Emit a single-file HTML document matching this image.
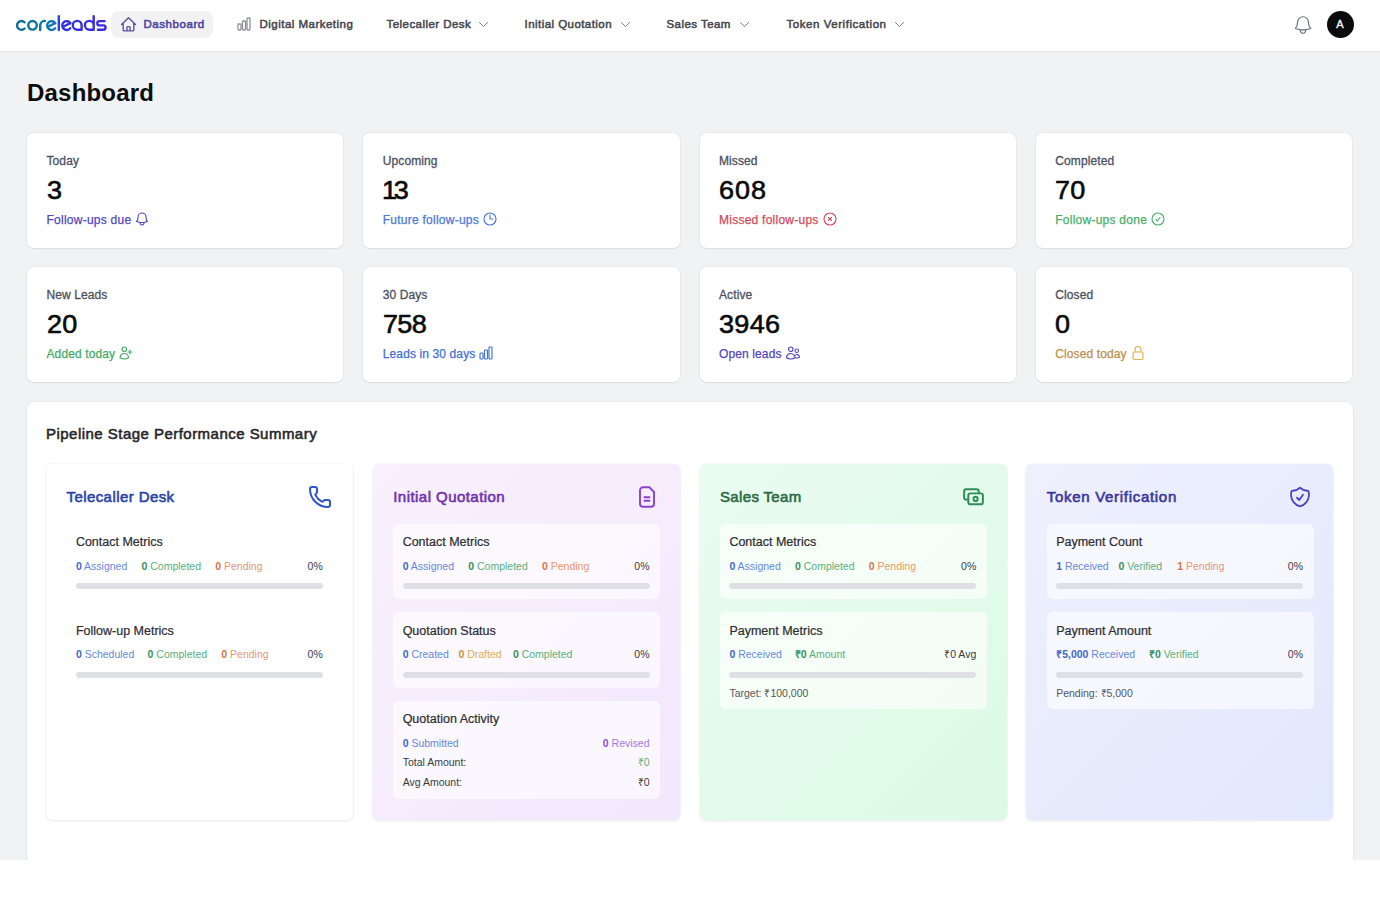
<!DOCTYPE html>
<html><head><meta charset="utf-8"><style>
*{box-sizing:border-box;margin:0;padding:0}
html,body{width:1380px;height:923px;overflow:hidden;background:#fff;font-family:"Liberation Sans",sans-serif;color:#111}
.abs{position:absolute}
.t{position:absolute;white-space:nowrap;line-height:1}
#page{position:absolute;left:0;top:0;width:1380px;height:860px;background:#f1f2f4;overflow:hidden}
#hdr{position:absolute;left:0;top:0;width:1380px;height:52px;background:#fff;border-bottom:1px solid #e7e8eb}
.nav{font-size:11.5px;color:#45464d;-webkit-text-stroke:0.5px #45464d;letter-spacing:0.45px}
.card{position:absolute;background:#fff;border-radius:7px;box-shadow:0 1px 2px rgba(16,24,40,.06),0 0 0 1px rgba(16,24,40,.03)}
.lab{font-size:12px;color:#4b5060;-webkit-text-stroke:0.3px #4b5060;letter-spacing:0.1px}
.num{font-size:25px;color:#0b0b0b;-webkit-text-stroke:0.6px #0b0b0b;letter-spacing:0.3px;transform:scaleX(1.08);transform-origin:0 0}
.sub{font-size:12px;letter-spacing:0.25px;display:flex;align-items:center}
#pipe{position:absolute;left:27px;top:402px;width:1326px;height:500px;background:#fff;border-radius:8px;box-shadow:0 1px 2px rgba(16,24,40,.05),0 0 0 1px rgba(16,24,40,.03)}
.stage{position:absolute;top:464px;width:307px;height:356px;border-radius:6px;box-shadow:0 1px 3px rgba(16,24,40,.08),0 0 0 1px rgba(16,24,40,.02)}
.stt{font-size:15px;letter-spacing:0.35px;-webkit-text-stroke:0.6px currentColor}
.sc{position:absolute;left:20px;width:267px;border-radius:6px}
.sct{font-size:12.5px;color:#2d2d33;-webkit-text-stroke:0.22px #2d2d33}
.mt{font-size:10.5px}
.mt b{font-weight:bold}
.bar{position:absolute;height:6px;border-radius:3px;background:#dfe0e5}
.bl{color:#6588da}.bl b{color:#4267c6}.gr{color:#58b07b}.gr b{color:#38905a}.or{color:#e9966c}.or b{color:#d6744a}.pu{color:#a47ade}.pu b{color:#8a52cc}.yl{color:#e0ad5c}.yl b{color:#c9953a}.dk{color:#3a3a3e}
</style></head><body>
<div id="page">
<div id="hdr">
<svg class="abs" style="left:0;top:0" width="120" height="50" viewBox="0 0 120 50" fill="none" stroke="url(#lg)" stroke-width="2.4" stroke-linecap="round" stroke-linejoin="round"><defs><linearGradient id="lg" gradientUnits="userSpaceOnUse" x1="16" y1="0" x2="107" y2="0"><stop offset="0" stop-color="#0b6d98"/><stop offset=".36" stop-color="#0d78a6"/><stop offset=".44" stop-color="#1a74c8"/><stop offset=".48" stop-color="#3233dd"/><stop offset="1" stop-color="#3b2be0"/></linearGradient></defs><path d="M24.6 22.3A4.4 4.4 0 1 0 24.6 28.5"/><circle cx="32.5" cy="25.3" r="4.3"/><path d="M40.2 30V25A4.6 4.6 0 0 1 44.9 20.9"/><path d="M47.5 27L55.3 23.2A4.4 4.4 0 1 0 55.1 28.2"/><path d="M58.8 16.2V30"/><path d="M62.6 27L70.4 23.2A4.4 4.4 0 1 0 70.2 28.2"/><path d="M77.2 29.7A4.4 4.4 0 1 1 81.6 25.3V29.7Z"/><path d="M93.7 16.2V29.7H89.3A4.4 4.4 0 1 1 93.7 25.3"/><path d="M104.6 21.1H99.4A2.15 2.15 0 0 0 99.4 25.4H103.4A2.15 2.15 0 0 1 103.4 29.7H97.9"/></svg>
<div class="abs" style="left:111px;top:11px;width:102px;height:27px;border-radius:8px;background:#f2f2f4"></div>
<svg class="abs" style="left:120px;top:16px" width="17" height="17" viewBox="0 0 24 24" fill="none" stroke="#5b5499" stroke-width="2.0" stroke-linecap="round" stroke-linejoin="round"><path d="m2.25 12 8.954-8.955c.44-.439 1.152-.439 1.591 0L21.75 12M4.5 9.75v10.125c0 .621.504 1.125 1.125 1.125H9.75v-4.875c0-.621.504-1.125 1.125-1.125h2.25c.621 0 1.125.504 1.125 1.125V21h4.125c.621 0 1.125-.504 1.125-1.125V9.75M8.25 21h8.25"/></svg>
<div class="t nav" style="left:143.5px;top:19px;color:#5249a0;-webkit-text-stroke:0.6px #5249a0;letter-spacing:0.55px">Dashboard</div>
<svg class="abs" style="left:236px;top:16px" width="16" height="16" viewBox="0 0 24 24" fill="none" stroke="#8e9198" stroke-width="1.9" stroke-linecap="round" stroke-linejoin="round"><path d="M3 13.125C3 12.504 3.504 12 4.125 12h2.25c.621 0 1.125.504 1.125 1.125v6.75C7.5 20.496 6.996 21 6.375 21h-2.25A1.125 1.125 0 0 1 3 19.875v-6.75ZM9.75 8.625c0-.621.504-1.125 1.125-1.125h2.25c.621 0 1.125.504 1.125 1.125v11.25c0 .621-.504 1.125-1.125 1.125h-2.25a1.125 1.125 0 0 1-1.125-1.125V8.625ZM16.5 4.125c0-.621.504-1.125 1.125-1.125h2.25C20.496 3 21 3.504 21 4.125v15.75c0 .621-.504 1.125-1.125 1.125h-2.25a1.125 1.125 0 0 1-1.125-1.125V4.125Z"/></svg>
<div class="t nav" style="left:259.5px;top:19px;letter-spacing:0.48px">Digital Marketing</div>
<div class="t nav" style="left:386.5px;top:19px;letter-spacing:0.45px">Telecaller Desk</div>
<svg class="abs" style="left:477px;top:18px" width="13" height="13" viewBox="0 0 24 24" fill="none" stroke="#6b6f78" stroke-width="1.7" stroke-linecap="round" stroke-linejoin="round"><path d="m19.5 8.25-7.5 7.5-7.5-7.5"/></svg>
<div class="t nav" style="left:524.5px;top:19px;letter-spacing:0.45px">Initial Quotation</div>
<svg class="abs" style="left:618.5px;top:18px" width="13" height="13" viewBox="0 0 24 24" fill="none" stroke="#6b6f78" stroke-width="1.7" stroke-linecap="round" stroke-linejoin="round"><path d="m19.5 8.25-7.5 7.5-7.5-7.5"/></svg>
<div class="t nav" style="left:666.5px;top:19px;letter-spacing:0.45px">Sales Team</div>
<svg class="abs" style="left:737.5px;top:18px" width="13" height="13" viewBox="0 0 24 24" fill="none" stroke="#6b6f78" stroke-width="1.7" stroke-linecap="round" stroke-linejoin="round"><path d="m19.5 8.25-7.5 7.5-7.5-7.5"/></svg>
<div class="t nav" style="left:786.5px;top:19px;letter-spacing:0.55px">Token Verification</div>
<svg class="abs" style="left:892.5px;top:18px" width="13" height="13" viewBox="0 0 24 24" fill="none" stroke="#6b6f78" stroke-width="1.7" stroke-linecap="round" stroke-linejoin="round"><path d="m19.5 8.25-7.5 7.5-7.5-7.5"/></svg>
<svg class="abs" style="left:1292px;top:14px" width="22" height="22" viewBox="0 0 24 24" fill="none" stroke="#6b6f78" stroke-width="1.3" stroke-linecap="round" stroke-linejoin="round"><path d="M14.857 17.082a23.848 23.848 0 0 0 5.454-1.31A8.967 8.967 0 0 1 18 9.75V9A6 6 0 0 0 6 9v.75a8.967 8.967 0 0 1-2.312 6.022c1.733.64 3.56 1.085 5.455 1.31m5.714 0a24.255 24.255 0 0 1-5.714 0m5.714 0a3 3 0 1 1-5.714 0"/></svg>
<div class="abs" style="left:1326.5px;top:11px;width:27px;height:27px;border-radius:50%;background:#0b0b0b"></div>
<div class="t" style="left:1326.5px;top:19px;width:27px;text-align:center;font-size:11px;color:#fff;-webkit-text-stroke:0.3px #fff">A</div>
</div>
<div class="t " style="left:27.00px;top:80.54px;font-size:24px;font-weight:bold;color:#0d0d0d;letter-spacing:0.2px">Dashboard</div>
<div class="card" style="left:27px;top:133px;width:316.25px;height:115px"></div>
<div class="t lab" style="left:46.50px;top:154.62px;">Today</div>
<div class="t num" style="left:46.50px;top:177.59px;">3</div>
<div class="t sub" style="left:46.5px;top:213.27px;color:#5146c0;-webkit-text-stroke:0.25px #5146c0;letter-spacing:0.25px">Follow-ups due<svg style="margin-left:3px;margin-top:-2px;-webkit-text-stroke:0" width="16" height="16" viewBox="0 0 24 24" fill="none" stroke="#5146c0" stroke-width="1.7" stroke-linecap="round" stroke-linejoin="round"><path d="M14.857 17.082a23.848 23.848 0 0 0 5.454-1.31A8.967 8.967 0 0 1 18 9.75V9A6 6 0 0 0 6 9v.75a8.967 8.967 0 0 1-2.312 6.022c1.733.64 3.56 1.085 5.455 1.31m5.714 0a24.255 24.255 0 0 1-5.714 0m5.714 0a3 3 0 1 1-5.714 0"/></svg></div>
<div class="card" style="left:363.25px;top:133px;width:316.25px;height:115px"></div>
<div class="t lab" style="left:382.75px;top:154.62px;">Upcoming</div>
<div class="t num" style="left:381.75px;top:177.59px;letter-spacing:-3.0px">13</div>
<div class="t sub" style="left:382.75px;top:213.27px;color:#4a78d8;-webkit-text-stroke:0.25px #4a78d8;letter-spacing:0.25px">Future follow-ups<svg style="margin-left:3px;margin-top:-2px;-webkit-text-stroke:0" width="16" height="16" viewBox="0 0 24 24" fill="none" stroke="#4a78d8" stroke-width="1.7" stroke-linecap="round" stroke-linejoin="round"><path d="M12 6v6h4.5m4.5 0a9 9 0 1 1-18 0 9 9 0 0 1 18 0Z"/></svg></div>
<div class="card" style="left:699.5px;top:133px;width:316.25px;height:115px"></div>
<div class="t lab" style="left:719.00px;top:154.62px;">Missed</div>
<div class="t num" style="left:719.00px;top:177.59px;letter-spacing:0.9px">608</div>
<div class="t sub" style="left:719.0px;top:213.27px;color:#d24a5a;-webkit-text-stroke:0.25px #d24a5a;letter-spacing:0.25px">Missed follow-ups<svg style="margin-left:3px;margin-top:-2px;-webkit-text-stroke:0" width="16" height="16" viewBox="0 0 24 24" fill="none" stroke="#d24a5a" stroke-width="1.7" stroke-linecap="round" stroke-linejoin="round"><path d="m9.75 9.75 4.5 4.5m0-4.5-4.5 4.5M21 12a9 9 0 1 1-18 0 9 9 0 0 1 18 0Z"/></svg></div>
<div class="card" style="left:1035.75px;top:133px;width:316.25px;height:115px"></div>
<div class="t lab" style="left:1055.25px;top:154.62px;">Completed</div>
<div class="t num" style="left:1055.25px;top:177.59px;">70</div>
<div class="t sub" style="left:1055.25px;top:213.27px;color:#4aad6c;-webkit-text-stroke:0.25px #4aad6c;letter-spacing:0.25px">Follow-ups done<svg style="margin-left:3px;margin-top:-2px;-webkit-text-stroke:0" width="16" height="16" viewBox="0 0 24 24" fill="none" stroke="#4aad6c" stroke-width="1.7" stroke-linecap="round" stroke-linejoin="round"><path d="M9 12.75 11.25 15 15 9.75M21 12a9 9 0 1 1-18 0 9 9 0 0 1 18 0Z"/></svg></div>
<div class="card" style="left:27px;top:267px;width:316.25px;height:115px"></div>
<div class="t lab" style="left:46.50px;top:288.62px;">New Leads</div>
<div class="t num" style="left:46.50px;top:311.59px;">20</div>
<div class="t sub" style="left:46.5px;top:347.27px;color:#45aa66;-webkit-text-stroke:0.25px #45aa66;letter-spacing:0.12px">Added today<svg style="margin-left:3px;margin-top:-2px;-webkit-text-stroke:0" width="16" height="16" viewBox="0 0 24 24" fill="none" stroke="#45aa66" stroke-width="1.7" stroke-linecap="round" stroke-linejoin="round"><path d="M18 7.5v3m0 0v3m0-3h3m-3 0h-3m-2.25-4.125a3.375 3.375 0 1 1-6.75 0 3.375 3.375 0 0 1 6.75 0ZM3 19.235v-.11a6.375 6.375 0 0 1 12.75 0v.109A12.318 12.318 0 0 1 9.374 21c-2.331 0-4.512-.645-6.374-1.766Z"/></svg></div>
<div class="card" style="left:363.25px;top:267px;width:316.25px;height:115px"></div>
<div class="t lab" style="left:382.75px;top:288.62px;">30 Days</div>
<div class="t num" style="left:382.75px;top:311.59px;letter-spacing:-0.6px">758</div>
<div class="t sub" style="left:382.75px;top:347.27px;color:#3f6fd6;-webkit-text-stroke:0.25px #3f6fd6;letter-spacing:0.12px">Leads in 30 days<svg style="margin-left:3px;margin-top:-2px;-webkit-text-stroke:0" width="16" height="16" viewBox="0 0 24 24" fill="none" stroke="#3f6fd6" stroke-width="1.7" stroke-linecap="round" stroke-linejoin="round"><path d="M3 13.125C3 12.504 3.504 12 4.125 12h2.25c.621 0 1.125.504 1.125 1.125v6.75C7.5 20.496 6.996 21 6.375 21h-2.25A1.125 1.125 0 0 1 3 19.875v-6.75ZM9.75 8.625c0-.621.504-1.125 1.125-1.125h2.25c.621 0 1.125.504 1.125 1.125v11.25c0 .621-.504 1.125-1.125 1.125h-2.25a1.125 1.125 0 0 1-1.125-1.125V8.625ZM16.5 4.125c0-.621.504-1.125 1.125-1.125h2.25C20.496 3 21 3.504 21 4.125v15.75c0 .621-.504 1.125-1.125 1.125h-2.25a1.125 1.125 0 0 1-1.125-1.125V4.125Z"/></svg></div>
<div class="card" style="left:699.5px;top:267px;width:316.25px;height:115px"></div>
<div class="t lab" style="left:719.00px;top:288.62px;">Active</div>
<div class="t num" style="left:719.00px;top:311.59px;">3946</div>
<div class="t sub" style="left:719.0px;top:347.27px;color:#5146c0;-webkit-text-stroke:0.25px #5146c0;letter-spacing:0.12px">Open leads<svg style="margin-left:3px;margin-top:-2px;-webkit-text-stroke:0" width="16" height="16" viewBox="0 0 24 24" fill="none" stroke="#5146c0" stroke-width="1.7" stroke-linecap="round" stroke-linejoin="round"><path d="M15 19.128a9.38 9.38 0 0 0 2.625.372 9.337 9.337 0 0 0 4.121-.952 4.125 4.125 0 0 0-7.533-2.493M15 19.128v-.003c0-1.113-.285-2.16-.786-3.07M15 19.128v.106A12.318 12.318 0 0 1 8.624 21c-2.331 0-4.512-.645-6.374-1.766l-.001-.109a6.375 6.375 0 0 1 11.964-3.07M12 6.375a3.375 3.375 0 1 1-6.75 0 3.375 3.375 0 0 1 6.75 0Zm8.25 2.25a2.625 2.625 0 1 1-5.25 0 2.625 2.625 0 0 1 5.25 0Z"/></svg></div>
<div class="card" style="left:1035.75px;top:267px;width:316.25px;height:115px"></div>
<div class="t lab" style="left:1055.25px;top:288.62px;">Closed</div>
<div class="t num" style="left:1055.25px;top:311.59px;letter-spacing:0.3px">0</div>
<div class="t sub" style="left:1055.25px;top:347.27px;color:#b8904f;-webkit-text-stroke:0.25px #b8904f;letter-spacing:0.12px">Closed today<svg style="margin-left:3px;margin-top:-2px;-webkit-text-stroke:0" width="16" height="16" viewBox="0 0 24 24" fill="none" stroke="#e0b048" stroke-width="1.7" stroke-linecap="round" stroke-linejoin="round"><path d="M16.5 10.5V6.75a4.5 4.5 0 1 0-9 0v3.75m-.75 11.25h10.5a2.25 2.25 0 0 0 2.25-2.25v-6.75a2.25 2.25 0 0 0-2.25-2.25H6.75a2.25 2.25 0 0 0-2.25 2.25v6.75a2.25 2.25 0 0 0 2.25 2.25Z"/></svg></div>
<div id="pipe"></div>
<div class="t " style="left:46.00px;top:425.66px;font-size:15px;color:#26262b;-webkit-text-stroke:0.55px #26262b;letter-spacing:0.47px">Pipeline Stage Performance Summary</div>
<div class="stage" style="left:46px;background:#fff"></div>
<div class="t stt" style="left:66.50px;top:489.21px;color:#2c44a8;letter-spacing:0.42px">Telecaller Desk</div>
<svg class="abs" style="left:308px;top:485px" width="24" height="24" viewBox="0 0 24 24" fill="none" stroke="#2f55c8" stroke-width="2.0" stroke-linecap="round" stroke-linejoin="round"><path d="M13.832 16.568a1 1 0 0 0 1.213-.303l.355-.465A2 2 0 0 1 17 15h3a2 2 0 0 1 2 2v3a2 2 0 0 1-2 2A18 18 0 0 1 2 4a2 2 0 0 1 2-2h3a2 2 0 0 1 2 2v3a2 2 0 0 1-.8 1.6l-.468.351a1 1 0 0 0-.292 1.233 14 14 0 0 0 6.392 6.384"/></svg>
<div class="t sct" style="left:75.90px;top:536.02px;">Contact Metrics</div>
<div class="t mt bl" style="left:75.90px;top:560.52px;"><b>0</b> Assigned</div>
<div class="t mt gr" style="left:141.50px;top:560.52px;"><b>0</b> Completed</div>
<div class="t mt or" style="left:215.20px;top:560.52px;"><b>0</b> Pending</div>
<div class="t mt dk" style="right:1057.25px;top:560.52px">0%</div>
<div class="bar" style="left:75.90px;top:583px;width:246.9px"></div>
<div class="t sct" style="left:75.90px;top:624.72px;">Follow-up Metrics</div>
<div class="t mt bl" style="left:75.90px;top:649.32px;"><b>0</b> Scheduled</div>
<div class="t mt gr" style="left:147.60px;top:649.32px;"><b>0</b> Completed</div>
<div class="t mt or" style="left:221.30px;top:649.32px;"><b>0</b> Pending</div>
<div class="t mt dk" style="right:1057.25px;top:649.32px">0%</div>
<div class="bar" style="left:75.90px;top:671.5px;width:246.9px"></div>
<div class="stage" style="left:372.75px;background:linear-gradient(135deg,#f9f1fd 0%,#f2e7fc 100%)"></div>
<div class="t stt" style="left:393.25px;top:489.21px;color:#7033ae;letter-spacing:0.45px">Initial Quotation</div>
<svg class="abs" style="left:634.5px;top:485px" width="24" height="24" viewBox="0 0 24 24" fill="none" stroke="#8a40d2" stroke-width="1.9" stroke-linecap="round" stroke-linejoin="round"><path d="M14.5 2.3H8a3 3 0 0 0-3 3v13.4a3 3 0 0 0 3 3h8a3 3 0 0 0 3-3V7Z"/><path d="M9.5 12.2h5M9.5 15.8h5"/></svg>
<div class="sc" style="left:393.00px;top:524px;height:75px;background:rgba(255,255,255,.62)"></div>
<div class="t sct" style="left:402.65px;top:536.02px;">Contact Metrics</div>
<div class="t mt bl" style="left:402.65px;top:560.52px;"><b>0</b> Assigned</div>
<div class="t mt gr" style="left:468.25px;top:560.52px;"><b>0</b> Completed</div>
<div class="t mt or" style="left:541.95px;top:560.52px;"><b>0</b> Pending</div>
<div class="t mt dk" style="right:730.50px;top:560.52px">0%</div>
<div class="bar" style="left:402.65px;top:583px;width:246.9px"></div>
<div class="sc" style="left:393.00px;top:611.5px;height:76px;background:rgba(255,255,255,.62)"></div>
<div class="t sct" style="left:402.65px;top:624.72px;">Quotation Status</div>
<div class="t mt bl" style="left:402.65px;top:649.32px;"><b>0</b> Created</div>
<div class="t mt yl" style="left:458.40px;top:649.32px;"><b>0</b> Drafted</div>
<div class="t mt gr" style="left:512.90px;top:649.32px;"><b>0</b> Completed</div>
<div class="t mt dk" style="right:730.50px;top:649.32px">0%</div>
<div class="bar" style="left:402.65px;top:671.5px;width:246.9px"></div>
<div class="sc" style="left:393.00px;top:701px;height:98px;background:rgba(255,255,255,.62)"></div>
<div class="t sct" style="left:402.65px;top:713.32px;">Quotation Activity</div>
<div class="t mt bl" style="left:402.65px;top:738.02px;"><b>0</b> Submitted</div>
<div class="t mt pu" style="right:730.50px;top:738.02px"><b>0</b> Revised</div>
<div class="t mt dk" style="left:402.65px;top:757.47px;">Total Amount:</div>
<div class="t mt gr" style="right:730.50px;top:757.47px">&#8377;0</div>
<div class="t mt dk" style="left:402.65px;top:776.92px;">Avg Amount:</div>
<div class="t mt dk" style="right:730.50px;top:776.92px">&#8377;0</div>
<div class="stage" style="left:699.5px;background:linear-gradient(135deg,#eafcf0 0%,#dcfae5 100%)"></div>
<div class="t stt" style="left:720.00px;top:489.21px;color:#2d6b47">Sales Team</div>
<svg class="abs" style="left:961px;top:484px" width="25" height="25" viewBox="0 0 24 24" fill="none" stroke="#2e8d55" stroke-width="1.9" stroke-linecap="round" stroke-linejoin="round"><path d="M7 11a2 2 0 0 1 2-2h10a2 2 0 0 1 2 2v6.5a2 2 0 0 1-2 2H9a2 2 0 0 1-2-2z"/><path d="M12 14.3a2 2 0 1 0 4 0a2 2 0 1 0-4 0"/><path d="M17 9V7a2 2 0 0 0-2-2H5a2 2 0 0 0-2 2v6a2 2 0 0 0 2 2h2"/></svg>
<div class="sc" style="left:719.75px;top:524px;height:75px;background:rgba(255,255,255,.62)"></div>
<div class="t sct" style="left:729.40px;top:536.02px;">Contact Metrics</div>
<div class="t mt bl" style="left:729.40px;top:560.52px;"><b>0</b> Assigned</div>
<div class="t mt gr" style="left:795.00px;top:560.52px;"><b>0</b> Completed</div>
<div class="t mt or" style="left:868.70px;top:560.52px;"><b>0</b> Pending</div>
<div class="t mt dk" style="right:403.75px;top:560.52px">0%</div>
<div class="bar" style="left:729.40px;top:583px;width:246.9px"></div>
<div class="sc" style="left:719.75px;top:611.5px;height:97.5px;background:rgba(255,255,255,.62)"></div>
<div class="t sct" style="left:729.40px;top:624.72px;">Payment Metrics</div>
<div class="t mt bl" style="left:729.40px;top:649.32px;"><b>0</b> Received</div>
<div class="t mt gr" style="left:794.80px;top:649.32px;"><b>&#8377;0</b> Amount</div>
<div class="t mt dk" style="right:403.75px;top:649.32px">&#8377;0 Avg</div>
<div class="bar" style="left:729.40px;top:671.5px;width:246.9px"></div>
<div class="t mt dk" style="left:729.40px;top:688.02px;"><span style="color:#555">Target: &#8377;100,000</span></div>
<div class="stage" style="left:1026.25px;background:linear-gradient(135deg,#eef0fc 0%,#e2e8fd 100%)"></div>
<div class="t stt" style="left:1046.75px;top:489.21px;color:#39379c;letter-spacing:0.7px">Token Verification</div>
<svg class="abs" style="left:1288px;top:485px" width="24" height="24" viewBox="0 0 24 24" fill="none" stroke="#4b45c6" stroke-width="1.8" stroke-linecap="round" stroke-linejoin="round"><path d="M9 12.75 11.25 15 15 9.75m-3-7.036A11.959 11.959 0 0 1 3.598 6 11.99 11.99 0 0 0 3 9.749c0 5.592 3.824 10.29 9 11.623 5.176-1.332 9-6.03 9-11.622 0-1.31-.21-2.571-.598-3.751h-.152c-3.196 0-6.1-1.248-8.25-3.285Z"/></svg>
<div class="sc" style="left:1046.50px;top:524px;height:75px;background:rgba(255,255,255,.62)"></div>
<div class="t sct" style="left:1056.15px;top:536.02px;">Payment Count</div>
<div class="t mt bl" style="left:1056.15px;top:560.52px;"><b>1</b> Received</div>
<div class="t mt gr" style="left:1118.40px;top:560.52px;"><b>0</b> Verified</div>
<div class="t mt or" style="left:1177.20px;top:560.52px;"><b>1</b> Pending</div>
<div class="t mt dk" style="right:77.00px;top:560.52px">0%</div>
<div class="bar" style="left:1056.15px;top:583px;width:246.9px"></div>
<div class="sc" style="left:1046.50px;top:611.5px;height:97.5px;background:rgba(255,255,255,.62)"></div>
<div class="t sct" style="left:1056.15px;top:624.72px;">Payment Amount</div>
<div class="t mt bl" style="left:1056.15px;top:649.32px;"><b>&#8377;5,000</b> Received</div>
<div class="t mt gr" style="left:1148.90px;top:649.32px;"><b>&#8377;0</b> Verified</div>
<div class="t mt dk" style="right:77.00px;top:649.32px">0%</div>
<div class="bar" style="left:1056.15px;top:671.5px;width:246.9px"></div>
<div class="t mt dk" style="left:1056.15px;top:688.02px;"><span style="color:#555">Pending: &#8377;5,000</span></div>
</div>
</body></html>
